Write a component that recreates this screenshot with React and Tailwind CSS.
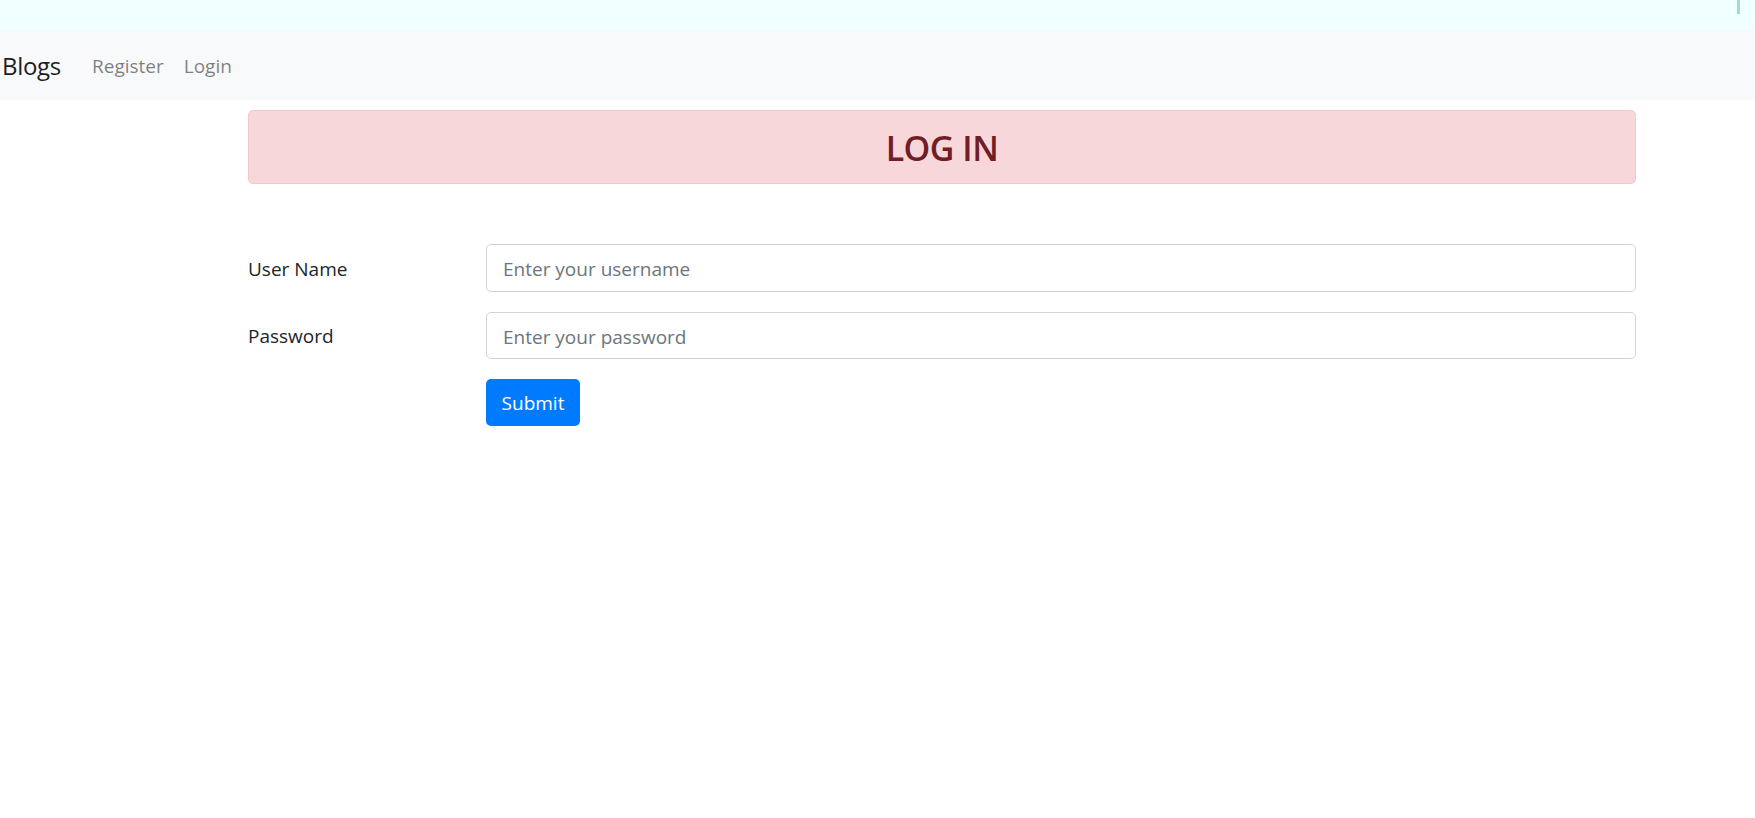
export default function App() {
  const font = { fontFamily: '"Open Sans", "Noto Sans", sans-serif' };
  return (
    <div className="min-h-[818px] bg-white text-[#212529]" style={font}>
      {/* top strip */}
      <div className="relative h-[30px] bg-[#f0ffff]">
        <div className="absolute left-[1737px] top-0 h-[14px] w-[3px] bg-[#a3d9d9]" />
      </div>

      {/* navbar */}
      <nav className="flex h-[70px] items-center bg-[#f8f9fa] pl-[2px] pt-[2px]">
        <a className="text-[24px] leading-none tracking-[-0.3px] text-[#000000e6]">Blogs</a>
        <div className="ml-[31px] flex gap-[20px] text-[19px] leading-none text-[#00000080]">
          <a>Register</a>
          <a>Login</a>
        </div>
      </nav>

      {/* content */}
      <div className="ml-[248px] mt-[10px] w-[1388px]">
        <div className="flex h-[74px] items-center justify-center rounded-[5px] border border-[#f5c6cb] bg-[#f8d7da] pt-[2px]">
          <h2 className="text-[34px] font-semibold leading-none tracking-[-0.5px] text-[#721c24]">LOG IN</h2>
        </div>

        <form className="mt-[60px] flex flex-col gap-[20px]">
          <div className="flex items-center">
            <label className="w-[238px] pt-[2px] text-[19px] text-[#212529]">User Name</label>
            <input
              className="h-[48px] flex-1 rounded-[5px] border border-[#ced4da] px-[16px] pt-[2px] text-[19px] outline-none placeholder:text-[#6c757d]"
              placeholder="Enter your username"
            />
          </div>
          <div className="flex items-center">
            <label className="w-[238px] pt-[2px] text-[19px] text-[#212529]">Password</label>
            <input
              type="password"
              className="h-[47px] flex-1 rounded-[5px] border border-[#ced4da] px-[16px] pt-[2px] text-[19px] outline-none placeholder:text-[#6c757d]"
              placeholder="Enter your password"
            />
          </div>
          <div className="flex pl-[238px]">
            <button
              type="button"
              className="h-[47px] w-[94px] rounded-[5px] bg-[#007bff] pt-[2px] text-[19px] text-white"
            >
              Submit
            </button>
          </div>
        </form>
      </div>
    </div>
  );
}
